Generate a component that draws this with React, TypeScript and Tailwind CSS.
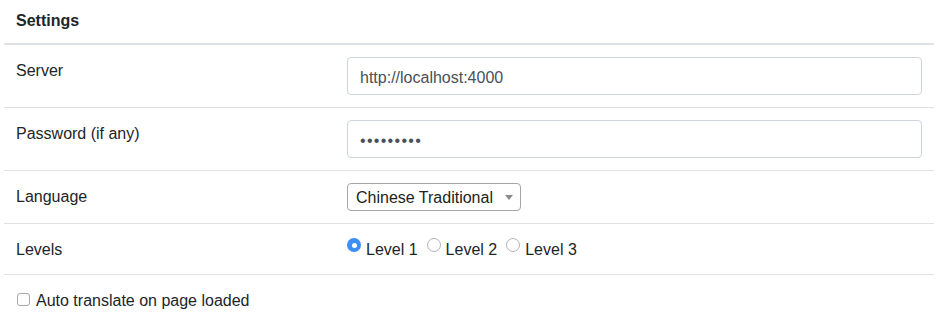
import React from "react";

const font = { fontFamily: '"Liberation Sans", Arial, Helvetica, sans-serif' };

function Radio({ checked }: { checked?: boolean }) {
  return checked ? (
    <span className="mt-[1px] flex h-[14px] w-[14px] shrink-0 items-center justify-center rounded-full bg-[#3b8ff6]">
      <span className="h-[5px] w-[5px] rounded-full bg-white" />
    </span>
  ) : (
    <span className="mt-[1px] h-[14px] w-[14px] shrink-0 rounded-full border border-[#b4b4b4] bg-white" />
  );
}

export default function App() {
  return (
    <div className="min-h-[324px] bg-white text-[16px] leading-[24px] text-[#212529]" style={font}>
      <div className="ml-[4px] w-[930px]">
        {/* header */}
        <div className="h-[45px] border-b-2 border-[#dee2e6] px-[12px] pt-[9px] font-bold">Settings</div>

        {/* Server */}
        <div className="flex h-[63px] border-b border-[#dee2e6]">
          <div className="w-[331px] shrink-0 px-[12px] pt-[14px]">Server</div>
          <div className="flex-1 px-[12px] pt-[12px]">
            <input
              readOnly
              value="http://localhost:4000"
              className="h-[38px] w-full rounded-[4px] border border-[#ced4da] bg-white px-[12px] pt-[4px] pb-0 text-[16px] text-[#495057] outline-none"
              style={font}
            />
          </div>
        </div>

        {/* Password */}
        <div className="flex h-[63px] border-b border-[#dee2e6]">
          <div className="w-[331px] shrink-0 px-[12px] pt-[14px]">Password (if any)</div>
          <div className="flex-1 px-[12px] pt-[12px]">
            <input
              readOnly
              type="password"
              value="123456789"
              className="h-[38px] w-full rounded-[4px] border border-[#ced4da] bg-white px-[12px] pt-[4px] pb-0 text-[16px] tracking-[1.3px] text-[#495057] outline-none"
              style={font}
            />
          </div>
        </div>

        {/* Language */}
        <div className="flex h-[53px] border-b border-[#dee2e6]">
          <div className="w-[331px] shrink-0 px-[12px] pt-[14px]">Language</div>
          <div className="flex-1 px-[12px] pt-[12px]">
            <div className="flex h-[28px] w-[174px] items-center justify-between rounded-[4px] border border-[#a6a6a6] bg-white pl-[8px] pr-[7px] pt-[2px]">
              <span className="text-[#222]">Chinese Traditional</span>
              <svg width="8" height="5" viewBox="0 0 8 5" className="-mt-[2px]">
                <path d="M0 0 L8 0 L4 5 Z" fill="#8a8a8a" />
              </svg>
            </div>
          </div>
        </div>

        {/* Levels */}
        <div className="flex h-[51px] border-b border-[#dee2e6]">
          <div className="w-[331px] shrink-0 px-[12px] pt-[14px]">Levels</div>
          <div className="flex flex-1 items-start gap-[9px] px-[12px] pt-[13px]">
            {["Level 1", "Level 2", "Level 3"].map((l, i) => (
              <label key={l} className="flex items-start gap-[5px]">
                <Radio checked={i === 0} />
                <span className="mt-[1px]">{l}</span>
              </label>
            ))}
          </div>
        </div>

        {/* Auto translate */}
        <div className="flex h-[49px] items-start px-[12px] pt-[14px]">
          <span className="ml-[1px] mt-[4px] h-[13px] w-[13px] shrink-0 rounded-[3px] border border-[#a9a9a9] bg-white" />
          <span className="ml-[6px]">Auto translate on page loaded</span>
        </div>
      </div>
    </div>
  );
}
